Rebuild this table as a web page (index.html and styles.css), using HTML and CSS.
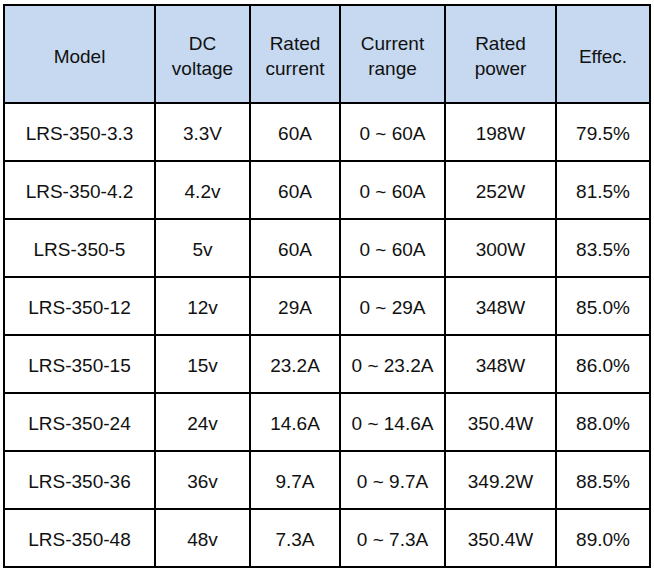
FILE: index.html
```html
<!DOCTYPE html>
<html>
<head>
<meta charset="utf-8">
<link rel="stylesheet" href="styles.css">
</head>
<body>
<table class="spec">
  <colgroup>
    <col class="c1"><col class="c2"><col class="c3"><col class="c4"><col class="c5"><col class="c6">
  </colgroup>
  <thead>
    <tr class="head">
      <th>Model</th>
      <th>DC<br>voltage</th>
      <th>Rated<br>current</th>
      <th>Current<br>range</th>
      <th>Rated<br>power</th>
      <th>Effec.</th>
    </tr>
  </thead>
  <tbody>
    <tr><td>LRS-350-3.3</td><td>3.3V</td><td>60A</td><td>0 ~ 60A</td><td>198W</td><td>79.5%</td></tr>
    <tr><td>LRS-350-4.2</td><td>4.2v</td><td>60A</td><td>0 ~ 60A</td><td>252W</td><td>81.5%</td></tr>
    <tr><td>LRS-350-5</td><td>5v</td><td>60A</td><td>0 ~ 60A</td><td>300W</td><td>83.5%</td></tr>
    <tr><td>LRS-350-12</td><td>12v</td><td>29A</td><td>0 ~ 29A</td><td>348W</td><td>85.0%</td></tr>
    <tr><td>LRS-350-15</td><td>15v</td><td>23.2A</td><td>0 ~ 23.2A</td><td>348W</td><td>86.0%</td></tr>
    <tr><td>LRS-350-24</td><td>24v</td><td>14.6A</td><td>0 ~ 14.6A</td><td>350.4W</td><td>88.0%</td></tr>
    <tr><td>LRS-350-36</td><td>36v</td><td>9.7A</td><td>0 ~ 9.7A</td><td>349.2W</td><td>88.5%</td></tr>
    <tr><td>LRS-350-48</td><td>48v</td><td>7.3A</td><td>0 ~ 7.3A</td><td>350.4W</td><td>89.0%</td></tr>
  </tbody>
</table>
</body>
</html>
```
FILE: styles.css
```css
html, body {
  background: #ffffff;
}
body {
  margin: 4px 0 0 3px;
  font-family: "Liberation Sans", Arial, sans-serif;
  color: #111111;
}
.spec {
  border-collapse: collapse;
  table-layout: fixed;
  width: 646px;
  font-size: 19px;
}
.c1 { width: 151px; }
.c2 { width: 95px; }
.c3 { width: 90px; }
.c4 { width: 105px; }
.c5 { width: 111px; }
.c6 { width: 94px; }
.spec th, .spec td {
  border: 2px solid #000000;
  padding: 2px 0 0 0;
  text-align: center;
  vertical-align: middle;
  font-weight: normal;
  line-height: 25px;
}
.head th {
  background: #c6d9f0;
  height: 92px;
  padding-top: 4px;
}
.spec td {
  height: 54px;
}
```
